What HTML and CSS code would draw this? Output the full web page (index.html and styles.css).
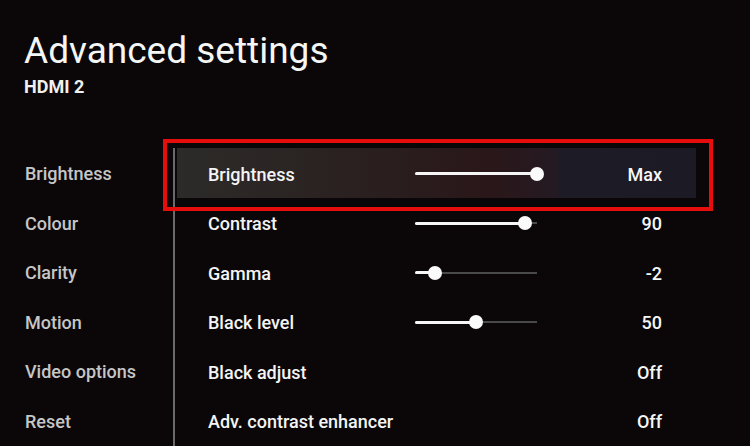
FILE: index.html
```html
<!DOCTYPE html>
<html>
	<head>
		<meta charset="utf-8">
		<title>Advanced settings</title>
		<link rel="stylesheet" href="styles.css">
	</head>
	<body>
		<div class="header">
			<h1 class="title">Advanced settings</h1>
			<div class="subtitle">HDMI 2</div>
		</div>

		<div class="screen">
			<ul class="nav">
				<li>Brightness</li>
				<li>Colour</li>
				<li>Clarity</li>
				<li>Motion</li>
				<li>Video options</li>
				<li>Reset</li>
			</ul>

			<div class="panel">
				<div class="row row-active">
					<span class="label">Brightness</span>
					<div class="slider"><div class="fill" style="width: 100%"></div></div>
					<span class="value">Max</span>
				</div>
				<div class="row">
					<span class="label">Contrast</span>
					<div class="slider"><div class="fill" style="width: 90%"></div></div>
					<span class="value">90</span>
				</div>
				<div class="row">
					<span class="label">Gamma</span>
					<div class="slider"><div class="fill" style="width: 16%"></div></div>
					<span class="value">-2</span>
				</div>
				<div class="row">
					<span class="label">Black level</span>
					<div class="slider"><div class="fill" style="width: 50%"></div></div>
					<span class="value">50</span>
				</div>
				<div class="row">
					<span class="label">Black adjust</span>
					<div class="slider slider-none"></div>
					<span class="value">Off</span>
				</div>
				<div class="row">
					<span class="label">Adv. contrast enhancer</span>
					<div class="slider slider-none"></div>
					<span class="value">Off</span>
				</div>
			</div>
		</div>
	</body>
</html>
```

FILE: styles.css
```css
html, body {
	margin: 0;
	padding: 0;
	height: 100%;
	overflow: hidden;
}

body {
	background: #0b0708;
	font-family: Roboto, "Liberation Sans", sans-serif;
	color: #f2f2f2;
}

.header {
	padding: 29px 0 0 24px;
}

.title {
	margin: 0;
	font-size: 37px;
	font-weight: 400;
	line-height: 44px;
	color: #f4f6f6;
}

.subtitle {
	margin-top: 4px;
	font-size: 18px;
	font-weight: 700;
	line-height: 20px;
	color: #f0f0f0;
}

.screen {
	display: flex;
	margin-top: 51px;
	height: 298px;
}

.nav {
	list-style: none;
	margin: 0;
	padding: 0 0 0 25px;
	width: 148px;
}

.nav li {
	height: 49.5px;
	line-height: 51px;
	font-size: 18px;
	font-weight: 500;
	color: #c6c6c6;
	white-space: nowrap;
}

.panel {
	flex: 0 0 521px;
	border-left: 2px solid #6a6a6a;
}

.row {
	position: relative;
	display: flex;
	align-items: center;
	height: 49.5px;
	padding: 0 34px 0 33px;
}

.row-active {
	background: linear-gradient(90deg, #2c2b29 0%, #2a2221 30%, #2a1719 60%, #251a22 72.5%, #1d1b26 74%, #1c1a24 100%);
	margin-left: 2px;
	padding-left: 31px;
}

.row-active::after {
	content: "";
	position: absolute;
	top: -9px;
	left: -14px;
	right: -17px;
	bottom: -13px;
	border: 4px solid #e60d0d;
}

.label {
	width: 207px;
	font-size: 18px;
	font-weight: 500;
	color: #f4f4f4;
	white-space: nowrap;
	padding-top: 3px;
}

.slider {
	position: relative;
	width: 122px;
	height: 2px;
	background: #4a4a4a;
	margin-top: 2px;
}

.slider-none {
	background: transparent;
}

.fill {
	position: absolute;
	left: 0;
	top: -0.5px;
	height: 3px;
	background: #f6f6f6;
	border-radius: 2px;
}

.fill::after {
	content: "";
	position: absolute;
	right: -7px;
	top: -5.5px;
	width: 14px;
	height: 14px;
	border-radius: 50%;
	background: #fafafa;
}

.value {
	margin-left: auto;
	font-size: 18px;
	font-weight: 500;
	color: #f6f6f6;
	padding-top: 3px;
}
```
